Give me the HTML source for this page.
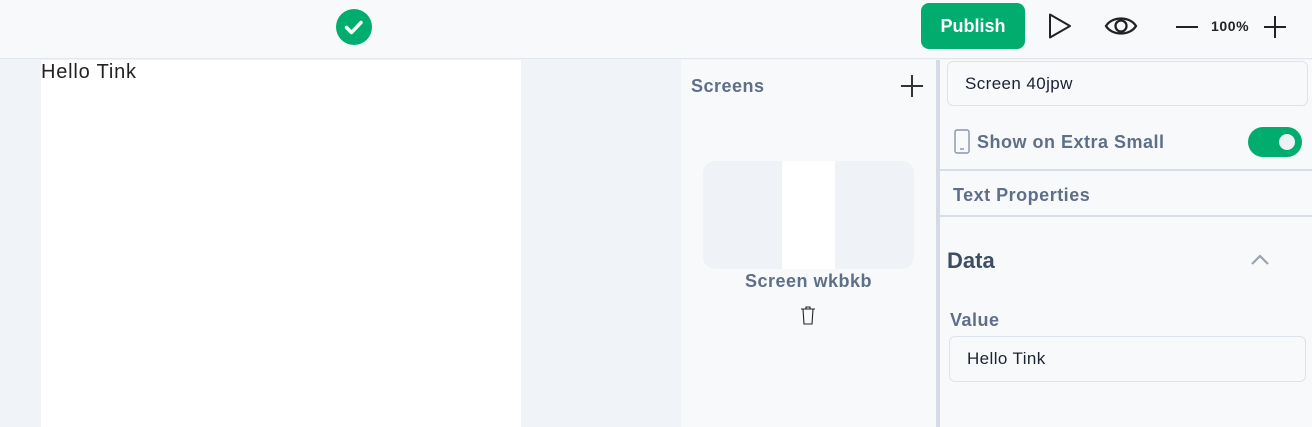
<!DOCTYPE html>
<html><head><meta charset="utf-8"><style>
*{box-sizing:border-box;margin:0;padding:0}
body{width:1312px;height:427px;overflow:hidden;background:#f0f3f8;font-family:"Liberation Sans",Arial,sans-serif;position:relative}
.a{position:absolute}
.top{left:0;top:0;width:1312px;height:59px;background:#f8f9fb;border-bottom:1px solid #e2e6ee}
.lbl{color:#5f6f87;font-weight:bold;letter-spacing:0.5px}
.inp{background:#f8f9fb;border:1px solid #dde3eb;border-radius:6px;font-size:17px;color:#1a2233;padding-left:17px;display:flex;align-items:center;letter-spacing:0.4px}
</style></head><body>
<div class="a top"></div>
<svg class="a" style="left:336px;top:9px" width="36" height="36"><circle cx="18" cy="18" r="18" fill="#00ac6e"/><path d="M10.5 18.5l5 5 9.5-10" stroke="#fff" stroke-width="3.5" fill="none" stroke-linecap="round" stroke-linejoin="round"/></svg>
<div class="a" style="left:921px;top:3px;width:104px;height:46px;background:#00ac6e;border-radius:8px;color:#fff;font-weight:bold;font-size:18px;display:flex;align-items:center;justify-content:center">Publish</div>
<svg class="a" style="left:1046px;top:12px" width="28" height="28"><path d="M4 2.5L24 14 4 25.5Z" fill="none" stroke="#222" stroke-width="2" stroke-linejoin="round"/></svg>
<svg class="a" style="left:1104px;top:12px" width="34" height="28"><path d="M2 14C8 4 26 4 32 14 26 24 8 24 2 14Z" fill="none" stroke="#222" stroke-width="2.3"/><circle cx="17" cy="14" r="5.5" fill="none" stroke="#222" stroke-width="2.3"/></svg>
<div class="a" style="left:1176px;top:26px;width:22px;height:2px;background:#222"></div>
<div class="a" style="left:1211px;top:18px;font-size:14px;font-weight:bold;color:#222;letter-spacing:0.6px">100%</div>
<div class="a" style="left:1264px;top:26px;width:22px;height:2px;background:#222"></div>
<div class="a" style="left:1274px;top:16px;width:2px;height:22px;background:#222"></div>

<div class="a" style="left:41px;top:60px;width:480px;height:367px;background:#fff"></div>
<div class="a" style="left:41px;top:61px;font-size:20px;color:#222;letter-spacing:0.8px">Hello Tink</div>

<div class="a" style="left:681px;top:60px;width:255px;height:367px;background:#f8f9fb"></div>
<div class="a lbl" style="left:691px;top:76px;font-size:18px">Screens</div>
<div class="a" style="left:901px;top:85px;width:22px;height:2px;background:#333"></div>
<div class="a" style="left:911px;top:75px;width:2px;height:22px;background:#333"></div>
<div class="a" style="left:703px;top:161px;width:211px;height:108px;background:#eff3f7;border-radius:12px"></div>
<div class="a" style="left:782px;top:161px;width:53px;height:108px;background:#fff"></div>
<div class="a lbl" style="left:681px;top:271px;width:255px;text-align:center;font-size:18px">Screen wkbkb</div>
<svg class="a" style="left:799px;top:305px" width="18" height="20"><path d="M2 4h14M7 4V2h4v2M4 4l1 15h8l1-15" fill="none" stroke="#222" stroke-width="1.1"/></svg>

<div class="a" style="left:936px;top:60px;width:4px;height:367px;background:#d5dbe6"></div>
<div class="a" style="left:940px;top:60px;width:372px;height:367px;background:#f8f9fb"></div>
<div class="a inp" style="left:947px;top:61px;width:361px;height:45px;padding-left:17px">Screen 40jpw</div>
<svg class="a" style="left:953px;top:129px" width="18" height="26"><rect x="2" y="1" width="14" height="23" rx="2" fill="none" stroke="#8795aa" stroke-width="1.4"/><path d="M7 20h4" stroke="#8795aa" stroke-width="1.4"/></svg>
<div class="a lbl" style="left:977px;top:132px;font-size:18px">Show on Extra Small</div>
<div class="a" style="left:1248px;top:127px;width:54px;height:30px;background:#00ac6e;border-radius:15px"></div>
<div class="a" style="left:1279px;top:134px;width:16px;height:16px;background:#eef2f7;border-radius:50%"></div>
<div class="a" style="left:940px;top:169px;width:372px;height:2px;background:#d8dee8"></div>
<div class="a lbl" style="left:953px;top:185px;font-size:18px">Text Properties</div>
<div class="a" style="left:940px;top:215px;width:372px;height:2px;background:#d8dee8"></div>
<div class="a" style="left:947px;top:248px;font-size:22px;font-weight:bold;color:#3f4d63">Data</div>
<svg class="a" style="left:1250px;top:252px" width="20" height="14"><path d="M2 12l8-8 8 8" fill="none" stroke="#9aa3b0" stroke-width="2.2"/></svg>
<div class="a lbl" style="left:950px;top:310px;font-size:18px">Value</div>
<div class="a inp" style="left:949px;top:336px;width:357px;height:46px">Hello Tink</div>
</body></html>
